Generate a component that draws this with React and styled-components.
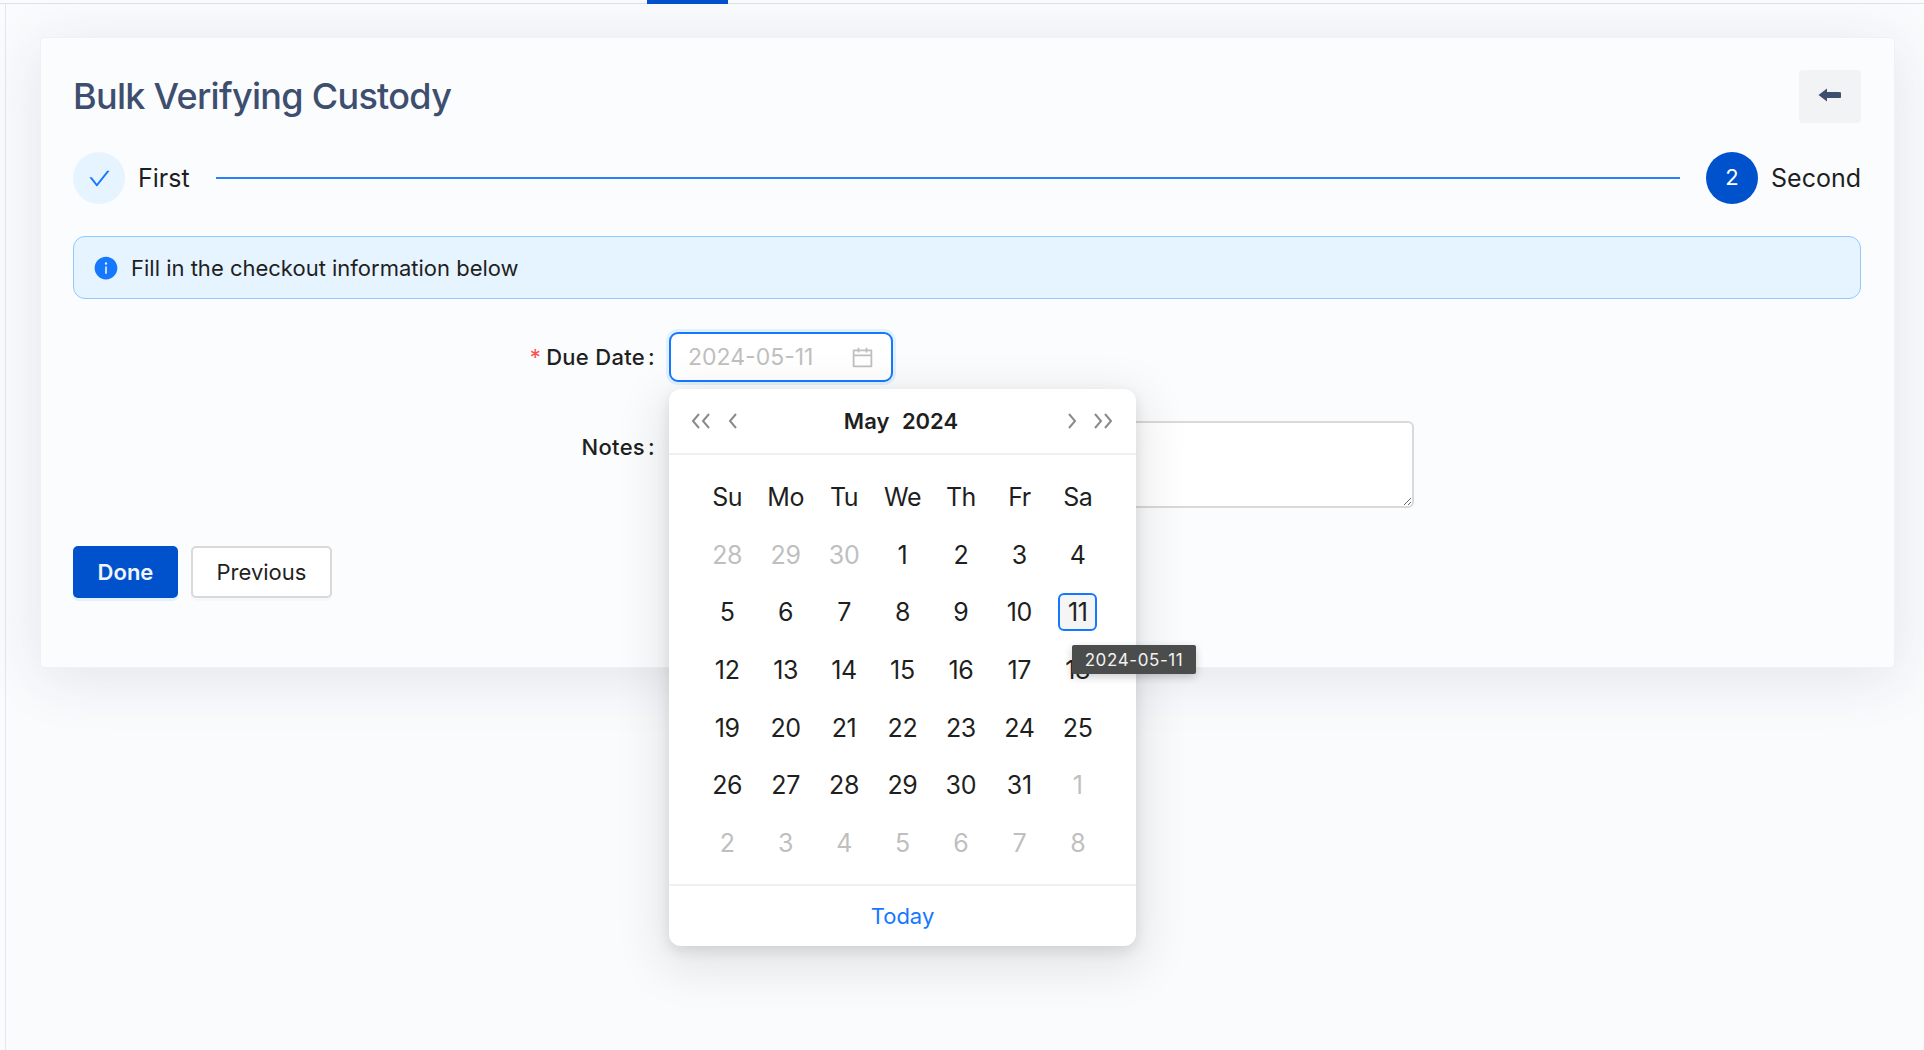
import React from 'react'
import styled, { createGlobalStyle } from 'styled-components'
import { AiOutlineCalendar, AiOutlineCheck, AiFillInfoCircle } from 'react-icons/ai'

const GlobalStyle = createGlobalStyle`
  html, body {
    margin: 0;
    padding: 0;
    height: 100%;
    background: #fafbfd;
    font-family: Inter, "Liberation Sans", sans-serif;
    color: #1f1f1f;
    overflow: hidden;
  }
  * { box-sizing: border-box; }
`

const TopBar = styled.div`
  height: 4px;
  border-bottom: 1px solid #dfe1e7;
  padding-left: 647px;
`

const ActiveTab = styled.div`
  width: 81px;
  height: 4px;
  background: #0052cc;
`

const Main = styled.main`
  margin-left: 5px;
  border-left: 1px solid #e4e6ec;
  height: 1046px;
  padding: 33px 29px 0 34px;
`

const Card = styled.section`
  height: 631px;
  background: #fbfcfe;
  border: 1px solid #f0f1f4;
  border-radius: 4px;
  box-shadow: 0 10px 60px rgba(40, 50, 70, 0.11);
  padding: 32px 33px 0 32px;
`

const Header = styled.header`
  display: flex;
  justify-content: space-between;
  align-items: center;
  height: 53px;
`

const Title = styled.h1`
  margin: -2px 0 0;
  font-size: 36px;
  font-weight: 500;
  letter-spacing: -0.7px;
  color: #3e4e6e;
`

const BackButton = styled.button`
  width: 62px;
  height: 53px;
  border: 0;
  border-radius: 4px;
  background: #f2f3f5;
  color: #3e4e6e;
  display: flex;
  align-items: center;
  justify-content: center;
  padding: 0 2px 4px 0;
`

const Steps = styled.div`
  display: flex;
  align-items: center;
  margin-top: 29px;
  height: 52px;
`

const StepCircle = styled.span`
  width: 52px;
  height: 52px;
  border-radius: 50%;
  flex: none;
  display: flex;
  align-items: center;
  justify-content: center;
  padding-bottom: ${(p) => (p.$done ? '0' : '2px')};
  font-size: ${(p) => (p.$done ? '25px' : '22px')};
  background: ${(p) => (p.$done ? '#e6f4ff' : '#0052cc')};
  color: ${(p) => (p.$done ? '#1677ff' : '#fff')};
`

const StepLabel = styled.span`
  font-size: 25px;
  margin-left: 13px;
  flex: none;
`

const StepLine = styled.span`
  flex: 1;
  height: 2px;
  background: #2a80f8;
  margin: 0 26px;
`

const Alert = styled.div`
  margin-top: 32px;
  height: 63px;
  background: #e6f4ff;
  border: 1.5px solid #91caff;
  border-radius: 12px;
  display: flex;
  align-items: center;
  padding-left: 19px;
  font-size: 22px;
  gap: 12px;
  color: #1f1f1f;
  svg { color: #1677ff; font-size: 26px; flex: none; }
`

const FormGrid = styled.div`
  margin-top: 33px;
  display: grid;
  grid-template-columns: 596px 745px;
  row-gap: 39px;
`

const Label = styled.label`
  height: 50px;
  padding-right: 14px;
  padding-top: ${(p) => (p.$low ? '2px' : '0')};
  display: flex;
  align-items: center;
  justify-content: flex-end;
  font-size: 22px;
  font-weight: 500;
  letter-spacing: 0.3px;
`

const Required = styled.span`
  color: #ff4d4f;
  margin-right: 5px;
  font-weight: 400;
`

const Colon = styled.span`
  margin-left: 3px;
`

const DateField = styled.div`
  position: relative;
`

const DateInput = styled.div`
  width: 224px;
  height: 50px;
  background: #fff;
  border: 2px solid #1677ff;
  border-radius: 9px;
  box-shadow: 0 0 0 3px rgba(5, 145, 255, 0.1);
  display: flex;
  align-items: center;
  justify-content: space-between;
  padding: 0 16px 0 17px;
  font-size: 23px;
  color: #bfbfbf;
  svg { font-size: 25px; }
`

const Notes = styled.textarea`
  display: block;
  width: 100%;
  height: 87px;
  background: #fff;
  border: 2px solid #d9d9d9;
  border-radius: 6px;
  resize: vertical;
  outline: none;
`

const Actions = styled.div`
  display: flex;
  gap: 13px;
  margin-top: 38px;
`

const Button = styled.button`
  height: 52px;
  width: ${(p) => (p.$primary ? '105px' : '141px')};
  border-radius: 5px;
  font-family: inherit;
  font-size: 22px;
  font-weight: ${(p) => (p.$primary ? 600 : 400)};
  color: ${(p) => (p.$primary ? '#f2f5fb' : '#1f1f1f')};
  background: ${(p) => (p.$primary ? '#0052cc' : '#fff')};
  border: ${(p) => (p.$primary ? '0' : '2px solid #d9d9d9')};
  box-shadow: ${(p) => (p.$primary ? '0 3px 0 rgba(5, 145, 255, 0.1)' : '0 3px 0 rgba(0, 0, 0, 0.02)')};
`

const Picker = styled.div`
  position: absolute;
  top: 57px;
  left: 0;
  width: 467px;
  background: #fff;
  border-radius: 12px;
  box-shadow: 0 14px 48px 10px rgba(0, 0, 0, 0.09), 0 5px 14px rgba(0, 0, 0, 0.1);
  z-index: 5;
`

const PickerHeader = styled.div`
  height: 66px;
  border-bottom: 2px solid #f0f0f0;
  display: flex;
  align-items: center;
  justify-content: space-between;
  padding: 0 21px;
`

const NavGroup = styled.div`
  display: flex;
  align-items: center;
  gap: ${(p) => (p.$right ? '14px' : '15px')};
  margin-right: ${(p) => (p.$right ? '1px' : '0')};
`

const MonthTitle = styled.div`
  font-size: 22px;
  font-weight: 600;
  word-spacing: 7px;
  margin-right: 3px;
`

const DayGrid = styled.div`
  display: grid;
  grid-template-columns: repeat(7, 1fr);
  grid-template-rows: 58px repeat(6, 57.6px);
  padding: 13px 29px 12.6px;
`

const HeadCell = styled.div`
  display: flex;
  align-items: center;
  justify-content: center;
  font-size: 25px;
  letter-spacing: -0.5px;
`

const DayCell = styled.div`
  display: flex;
  align-items: center;
  justify-content: center;
  font-size: 25px;
  letter-spacing: -0.3px;
  color: ${(p) => (p.$muted ? '#bfbfbf' : '#1f1f1f')};
`

const SelectedDay = styled.span`
  width: 39px;
  height: 38px;
  display: flex;
  align-items: center;
  justify-content: center;
  background: #f5f5f5;
  border: 2px solid #1677ff;
  border-radius: 6px;
`

const PickerFooter = styled.div`
  height: 62px;
  border-top: 2px solid #f0f0f0;
  display: flex;
  align-items: center;
  justify-content: center;
  font-size: 22px;
  color: #1677ff;
`

const Tip = styled.div`
  position: absolute;
  top: 256px;
  left: 403px;
  width: 124px;
  height: 29px;
  background: #4b4c4c;
  color: #f2f2f2;
  border-radius: 2px;
  box-shadow: 0 3px 8px rgba(0, 0, 0, 0.2);
  font-size: 17px;
  letter-spacing: 0.6px;
  display: flex;
  align-items: center;
  justify-content: center;
`

const Chevron = ({ dir, double }) => {
  const pts = dir === 'left' ? ['9,3 3,10 9,17', '19,3 13,10 19,17'] : ['3,3 9,10 3,17', '13,3 19,10 13,17']
  return (
    <svg width={double ? 22 : 12} height="20" viewBox={double ? '0 0 22 20' : '0 0 12 20'} fill="none" stroke="#8a8a8a" strokeWidth="2">
      <polyline points={pts[0]} />
      {double && <polyline points={pts[1]} />}
    </svg>
  )
}

const BackArrow = () => (
  <svg width="23" height="14" viewBox="0 0 23 14" fill="currentColor">
    <path d="M0.5 7 L9 0.5 V4 H21 a3 3 0 0 1 0 6 H9 V13.5 Z" />
  </svg>
)

const weeks = ['Su', 'Mo', 'Tu', 'We', 'Th', 'Fr', 'Sa']

const days = [
  ...[28, 29, 30].map((d) => ({ d, muted: true })),
  ...Array.from({ length: 31 }, (_, i) => ({ d: i + 1 })),
  ...Array.from({ length: 8 }, (_, i) => ({ d: i + 1, muted: true })),
]

export default function App() {
  return (
    <>
      <GlobalStyle />
      <TopBar>
        <ActiveTab />
      </TopBar>
      <Main>
        <Card>
          <Header>
            <Title>Bulk Verifying Custody</Title>
            <BackButton>
              <BackArrow />
            </BackButton>
          </Header>
          <Steps>
            <StepCircle $done>
              <AiOutlineCheck />
            </StepCircle>
            <StepLabel>First</StepLabel>
            <StepLine />
            <StepCircle>2</StepCircle>
            <StepLabel>Second</StepLabel>
          </Steps>
          <Alert>
            <AiFillInfoCircle />
            Fill in the checkout information below
          </Alert>
          <FormGrid>
            <Label>
              <Required>*</Required>Due Date<Colon>:</Colon>
            </Label>
            <DateField>
              <DateInput>
                2024-05-11
                <AiOutlineCalendar />
              </DateInput>
              <Picker>
                <PickerHeader>
                  <NavGroup>
                    <Chevron dir="left" double />
                    <Chevron dir="left" />
                  </NavGroup>
                  <MonthTitle>May 2024</MonthTitle>
                  <NavGroup $right>
                    <Chevron dir="right" />
                    <Chevron dir="right" double />
                  </NavGroup>
                </PickerHeader>
                <DayGrid>
                  {weeks.map((w) => (
                    <HeadCell key={w}>{w}</HeadCell>
                  ))}
                  {days.map((item, i) => (
                    <DayCell key={i} $muted={item.muted}>
                      {item.d === 11 && !item.muted ? <SelectedDay>11</SelectedDay> : item.d}
                    </DayCell>
                  ))}
                </DayGrid>
                <PickerFooter>Today</PickerFooter>
                <Tip>2024-05-11</Tip>
              </Picker>
            </DateField>
            <Label $low>
              Notes<Colon>:</Colon>
            </Label>
            <Notes />
          </FormGrid>
          <Actions>
            <Button $primary>Done</Button>
            <Button>Previous</Button>
          </Actions>
        </Card>
      </Main>
    </>
  )
}
